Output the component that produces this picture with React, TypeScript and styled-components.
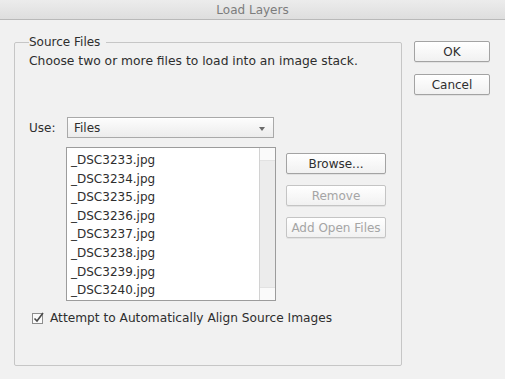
import styled, { createGlobalStyle } from 'styled-components';

let Global = createGlobalStyle`
  html, body {
    margin: 0;
    padding: 0;
    background: #f1f1f1;
  }
  body {
    font-family: 'DejaVu Sans', 'Liberation Sans', sans-serif;
    font-size: 12px;
    color: #2e2e2e;
  }
`;

let Window = styled.div`
  width: 505px;
  height: 379px;
  display: flex;
  flex-direction: column;
  background: #f1f1f1;
  overflow: hidden;
`;

let TitleBar = styled.div`
  height: 19px;
  flex: none;
  display: flex;
  align-items: center;
  justify-content: center;
  background: linear-gradient(#ececec, #dedede);
  border-bottom: 1px solid #b9b9b9;
  color: #7c7c7c;
  font-size: 12px;
`;

let Body = styled.div`
  display: flex;
  align-items: flex-start;
  padding: 14px 0 0 14px;
`;

// fieldset box starts at the legend top; the border line sits at its middle
let Group = styled.fieldset`
  box-sizing: border-box;
  width: 388px;
  height: 332px;
  margin: 0;
  padding: 3px 0 0 14px;
  border: 1px solid #c6c6c6;
  border-radius: 2px;
  min-width: 0;
`;

let Legend = styled.legend`
  padding: 0 6px 0 0;
  line-height: 16px;
  font-size: 12px;
  color: #2e2e2e;
`;

let Description = styled.p`
  margin: 0;
  line-height: 16px;
  font-size: 12.3px;
`;

let UseRow = styled.div`
  display: flex;
  align-items: center;
  margin-top: 48px;
`;

let Label = styled.span`
  width: 38px;
  flex: none;
`;

let Select = styled.div`
  box-sizing: border-box;
  width: 207px;
  height: 21px;
  display: flex;
  align-items: center;
  justify-content: space-between;
  padding: 0 8px 0 6px;
  border: 1px solid #a9a9a9;
  background: linear-gradient(#fdfdfd, #ececec);
  box-shadow: inset 0 1px 0 #fff;
`;

let Arrow = styled.span`
  width: 0;
  height: 0;
  border-left: 3.5px solid transparent;
  border-right: 3.5px solid transparent;
  border-top: 4px solid #6a6a6a;
  margin-top: 2px;
`;

let FilesRow = styled.div`
  display: flex;
  align-items: flex-start;
  margin: 9px 0 0 37px;
  gap: 10px;
`;

let List = styled.div`
  box-sizing: border-box;
  width: 210px;
  height: 154px;
  display: flex;
  border: 1px solid #9c9c9c;
  background: #fff;
`;

let Items = styled.ul`
  flex: 1;
  margin: 0;
  padding: 3px 0 0 4px;
  list-style: none;
  overflow: hidden;
`;

let Item = styled.li`
  height: 18.6px;
  line-height: 18.6px;
  white-space: nowrap;
`;

let Scrollbar = styled.div`
  width: 15px;
  flex: none;
  display: flex;
  flex-direction: column;
  justify-content: space-between;
  background: #ececec;
  border-left: 1px solid #d2d2d2;
`;

let ScrollCap = styled.div`
  height: 12px;
  background: #fafafa;
  border-top: 1px solid #e2e2e2;
  border-bottom: 1px solid #e2e2e2;
  &:first-child {
    border-top: none;
  }
  &:last-child {
    border-bottom: none;
  }
`;

let ButtonStack = styled.div`
  display: flex;
  flex-direction: column;
  gap: 11px;
  padding-top: 6px;
`;

let Button = styled.button<{ $width: number; $disabled?: boolean }>`
  box-sizing: border-box;
  width: ${p => p.$width}px;
  height: 21px;
  padding: 0;
  font-family: inherit;
  font-size: 12px;
  color: ${p => (p.$disabled ? '#a5a5a5' : '#2e2e2e')};
  border: 1px solid ${p => (p.$disabled ? '#c4c4c4' : '#a3a3a3')};
  border-radius: 2px;
  background: linear-gradient(#ffffff, #f1f1f1);
  box-shadow: 0 1px 0 rgba(0, 0, 0, 0.06);
`;

let CheckRow = styled.label`
  display: flex;
  align-items: center;
  gap: 6px;
  margin: 10px 0 0 3px;
  font-size: 12.2px;
`;

let Box = styled.span`
  width: 12px;
  height: 12px;
  display: flex;
  align-items: center;
  justify-content: center;
`;

let Side = styled.div`
  display: flex;
  flex-direction: column;
  gap: 12px;
  margin: 7px 0 0 12px;
`;

let files = ['3233', '3234', '3235', '3236', '3237', '3238', '3239', '3240'];

export default function App() {
  return (
    <Window>
      <Global />
      <TitleBar>Load Layers</TitleBar>
      <Body>
        <Group>
          <Legend>Source Files</Legend>
          <Description>Choose two or more files to load into an image stack.</Description>

          <UseRow>
            <Label>Use:</Label>
            <Select>
              Files
              <Arrow />
            </Select>
          </UseRow>

          <FilesRow>
            <List>
              <Items>
                {files.map(n => (
                  <Item key={n}>_DSC{n}.jpg</Item>
                ))}
              </Items>
              <Scrollbar>
                <ScrollCap />
                <ScrollCap />
              </Scrollbar>
            </List>
            <ButtonStack>
              <Button $width={100}>Browse...</Button>
              <Button $width={100} $disabled>Remove</Button>
              <Button $width={100} $disabled>Add Open Files</Button>
            </ButtonStack>
          </FilesRow>

          <CheckRow>
            <Box>
              <svg width="12" height="12" viewBox="0 0 12 12">
                <rect x="0.5" y="1.5" width="10" height="10" fill="#fbfbfb" stroke="#8e8e8e" />
                <path d="M2.5 6.5 L5 9 L11 1" fill="none" stroke="#4a4a4a" strokeWidth="1.6" />
              </svg>
            </Box>
            Attempt to Automatically Align Source Images
          </CheckRow>
        </Group>

        <Side>
          <Button $width={76}>OK</Button>
          <Button $width={76}>Cancel</Button>
        </Side>
      </Body>
    </Window>
  );
}
